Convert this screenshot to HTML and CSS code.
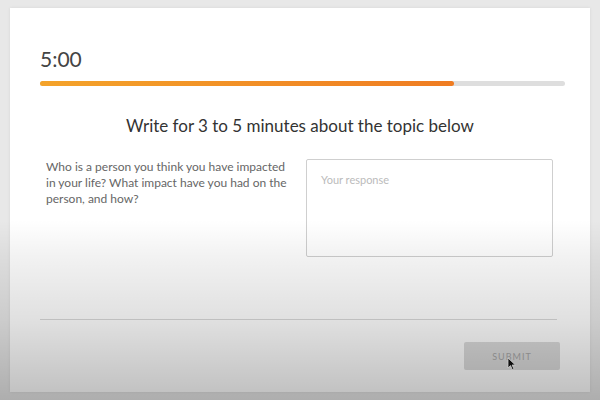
FILE: index.html
```html
<!DOCTYPE html>
<html lang="en">
<head>
  <meta charset="UTF-8">
  <title>Timed Writing</title>
  <link rel="stylesheet" href="styles.css">
</head>
<body>
  <div class="card">
    <div class="timer">5:00</div>
    <div class="progress">
      <div class="progress-fill" style="width: 78.9%"></div>
    </div>

    <h1 class="title">Write for 3 to 5 minutes about the topic below</h1>

    <div class="task">
      <p class="prompt">Who is a person you think you have impacted in your life? What impact have you had on the person, and how?</p>
      <textarea class="response" placeholder="Your response"></textarea>
    </div>

    <div class="divider"></div>

    <div class="actions">
      <button class="submit-btn" disabled>SUBMIT</button>
    </div>
  </div>

  <!-- mouse pointer from the recording -->
  <svg class="cursor" width="10" height="14" viewBox="0 0 10 14">
    <path d="M1 1 L1 11 L3.5 8.6 L5.3 12.6 L6.9 11.9 L5.1 8 L8.4 8 Z" fill="#111" stroke="#fff" stroke-width="0.8"/>
  </svg>

  <div class="shade"></div>
</body>
</html>
```

FILE: styles.css
```css
body {
  margin: 0;
  font-family: Lato, "Open Sans", sans-serif;
  background-color: #e8e8e8;
  color: #333;
  width: 600px;
  height: 400px;
  overflow: hidden;
}
.card {
  background-color: #fff;
  margin: 8px 10px;
  width: 580px;
  height: 384px;
  box-sizing: border-box;
  padding: 0 30px;
  box-shadow: 0 0 3px rgba(0, 0, 0, 0.08);
}
.timer {
  padding-top: 38px;
  font-size: 21px;
  line-height: 26px;
  color: #444;
}
.progress {
  margin-top: 9px;
  width: 525px;
  height: 5px;
  border-radius: 3px;
  background-color: #dedede;
}
.progress-fill {
  height: 100%;
  border-radius: 3px;
  background: linear-gradient(to right, #f4a32a, #ef7c22);
}
.title {
  margin: 29px 0 0;
  font-size: 17px;
  font-weight: normal;
  line-height: 22px;
  text-align: center;
  color: #333;
}
.task {
  display: flex;
  justify-content: space-between;
  align-items: flex-start;
  margin: 22px 7px 0 6px;
}
.prompt {
  margin: 0;
  width: 250px;
  font-size: 12px;
  line-height: 16px;
  color: #666;
}
.response {
  width: 247px;
  height: 98px;
  box-sizing: border-box;
  border: 1px solid #cfcfcf;
  border-radius: 2px;
  padding: 13px 14px;
  font-family: Lato, "Open Sans", sans-serif;
  font-size: 11px;
  resize: none;
  outline: none;
}
.response::placeholder {
  color: #bbb;
}
.divider {
  margin-top: 62px;
  width: 517px;
  height: 1px;
  background-color: #d9d9d9;
}
.actions {
  display: flex;
  justify-content: flex-end;
  margin-top: 22px;
}
.submit-btn {
  width: 96px;
  height: 28px;
  border: none;
  border-radius: 2px;
  background-color: #dcdcdc;
  color: #a8a8a8;
  font-family: Lato, "Open Sans", sans-serif;
  font-size: 9px;
  letter-spacing: 1px;
}
.cursor {
  position: absolute;
  left: 507px;
  top: 357px;
}
.shade {
  position: absolute;
  left: 0;
  top: 0;
  width: 600px;
  height: 400px;
  pointer-events: none;
  background: linear-gradient(to bottom,
    rgba(0, 0, 0, 0) 55%,
    rgba(0, 0, 0, 0.05) 64%,
    rgba(0, 0, 0, 0.12) 80%,
    rgba(0, 0, 0, 0.2) 92%,
    rgba(0, 0, 0, 0.25) 100%);
}
```
